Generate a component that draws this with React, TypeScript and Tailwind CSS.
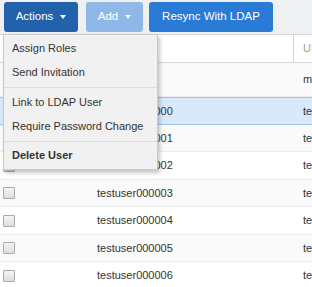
import { useState } from "react";

const rows = [
  { id: "m", name: "", col3: "m", h: "h-[34px]" },
  { id: "000000", name: "testuser000000", col3: "te", h: "h-[28px]", selected: true },
  { id: "000001", name: "testuser000001", col3: "te", h: "h-[27px]" },
  { id: "000002", name: "testuser000002", col3: "te", h: "h-[28px]" },
  { id: "000003", name: "testuser000003", col3: "te", h: "h-[27px]" },
  { id: "000004", name: "testuser000004", col3: "te", h: "h-[28px]" },
  { id: "000005", name: "testuser000005", col3: "te", h: "h-[27px]" },
  { id: "000006", name: "testuser000006", col3: "te", h: "h-[28px]" },
];

function Caret() {
  return (
    <span className="ml-[7px] inline-block w-0 h-0 border-l-[3.5px] border-r-[3.5px] border-t-[4px] border-l-transparent border-r-transparent border-t-white" />
  );
}

function Checkbox() {
  return (
    <span className="inline-block w-[12px] h-[12px] border border-[#a9a9a9] rounded-[1px] bg-gradient-to-b from-[#f4f4f4] to-[#dedede]" />
  );
}

export default function App() {
  const [menuOpen] = useState(true);

  return (
    <div className="relative w-[312px] h-[287px] overflow-hidden bg-white font-['Liberation_Sans',Arial,sans-serif] text-[11px] text-[#333]">
      {/* toolbar */}
      <div className="h-[34px] bg-[#eff0f2] flex items-start pt-[2px] pl-[4px] gap-[8px]">
        <button className="shrink-0 h-[30px] w-[74px] rounded-[3px] bg-[#2261ab] text-white text-[11.5px] flex items-center justify-center">
          Actions
          <Caret />
        </button>
        <button className="shrink-0 h-[30px] w-[57px] rounded-[3px] bg-[#8fb8e8] text-white text-[11.5px] flex items-center justify-center">
          Add
          <Caret />
        </button>
        <button className="shrink-0 -ml-[2px] h-[30px] w-[124px] rounded-[3px] bg-[#2a7bd5] text-white text-[11.5px] flex items-center justify-center">
          Resync With LDAP
        </button>
      </div>

      {/* table */}
      <div className="border-t border-[#d6d6d6]">
        <div className="flex h-[28px] border-b border-[#d6d6d6] bg-white">
          <div className="w-[90px] shrink-0" />
          <div className="w-[204px] shrink-0 border-r border-[#d6d6d6]" />
          <div className="flex-1 pl-[9px] flex items-center text-[#a0a0a0] whitespace-nowrap">USERNAME</div>
        </div>
        {rows.map((r, i) => (
          <div
            key={r.id}
            className={
              "flex items-center " +
              r.h +
              " " +
              (r.selected
                ? "bg-[#d8e9fb] border-y border-[#9fc4ec]"
                : i % 2 === 0
                ? "bg-[#fafafa] border-b border-[#ececec]"
                : "bg-white border-b border-[#ececec]")
            }
          >
            <div className="w-[90px] shrink-0 pl-[3px] flex items-center">
              <Checkbox />
            </div>
            <div className="w-[204px] shrink-0 pl-[7px] whitespace-nowrap">{r.name}</div>
            <div className="flex-1 pl-[9px] whitespace-nowrap">{r.col3}</div>
          </div>
        ))}
      </div>

      {/* dropdown */}
      {menuOpen && (
        <div className="absolute left-[3px] top-[34px] w-[155px] bg-[#f1f1f1] border border-[#c8c8c8] shadow-[2px_3px_4px_rgba(0,0,0,0.22)] pt-[1px] pb-[3px]">
          <div className="h-[24px] flex items-center pl-[8px]">Assign Roles</div>
          <div className="h-[24px] flex items-center pl-[8px]">Send Invitation</div>
          <div className="h-[6px] flex items-center">
            <div className="w-full h-[1px] bg-[#dcdcdc]" />
          </div>
          <div className="h-[24px] flex items-center pl-[8px]">Link to LDAP User</div>
          <div className="h-[24px] flex items-center pl-[8px]">Require Password Change</div>
          <div className="h-[6px] flex items-center">
            <div className="w-full h-[1px] bg-[#dcdcdc]" />
          </div>
          <div className="h-[22px] flex items-center pl-[8px] font-bold">Delete User</div>
        </div>
      )}
    </div>
  );
}
